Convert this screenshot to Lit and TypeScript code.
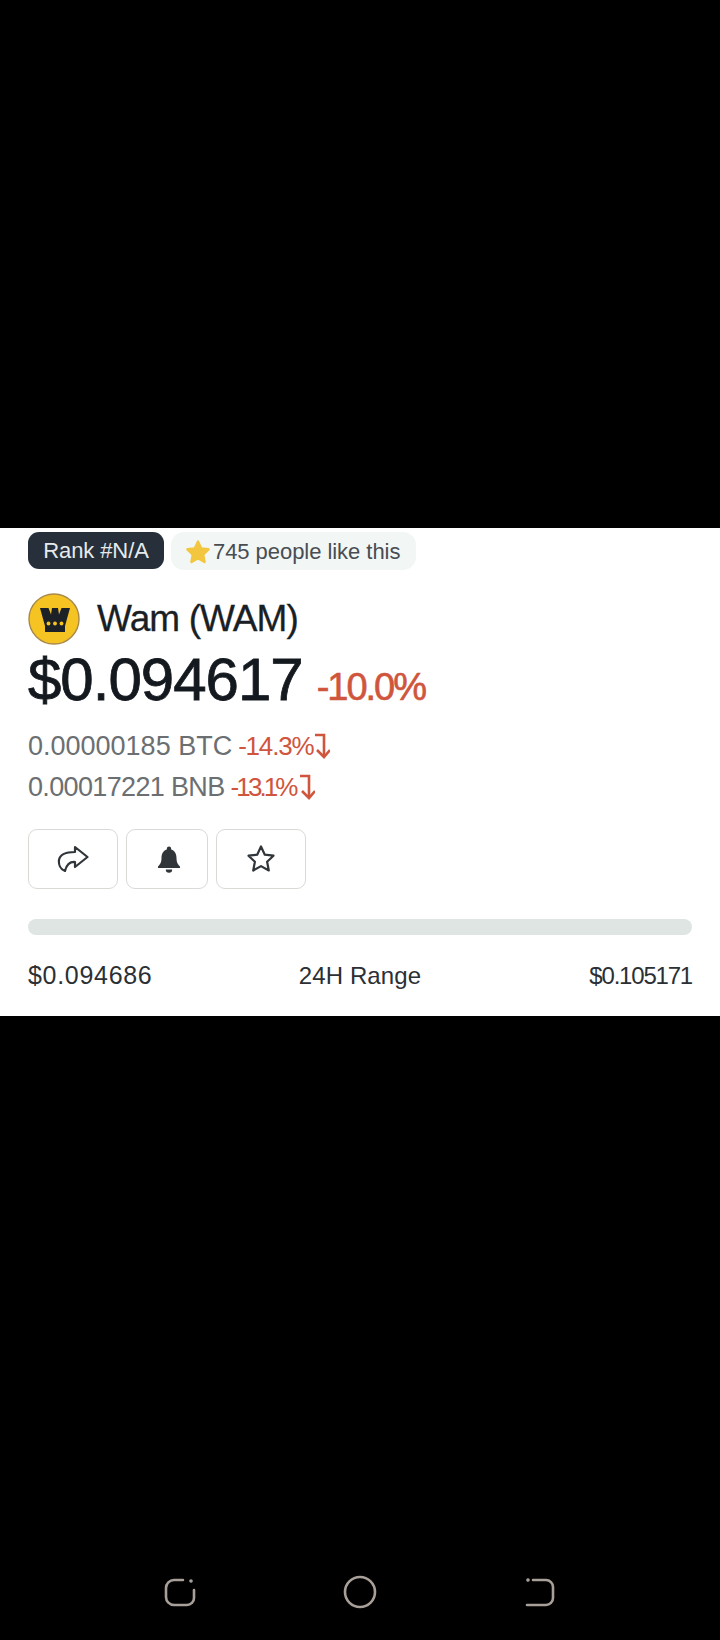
import { LitElement, html, css } from 'lit'
import { customElement } from 'lit/decorators.js'

const downArrow = html`<svg class="arrow" viewBox="0 0 16 26" fill="none" stroke="#cf553d" stroke-width="2.6">
	<path d="M1 2h9v21.500" />
	<path d="M3 17l7 7 6-7" />
</svg>`

@customElement('app-root')
export class AppRoot extends LitElement {
	static styles = css`
		:host {
			display: flex;
			flex-direction: column;
			width: 720px;
			height: 1640px;
			background: #000;
			font-family: 'Liberation Sans', Arial, sans-serif;
		}

		.top {
			height: 528px;
		}

		.card {
			height: 488px;
			box-sizing: border-box;
			background: #fff;
			padding: 4px 28px 0;
			color: #171c22;
		}

		.pills {
			display: flex;
			gap: 7px;
			height: 38px;
		}

		.rank {
			display: flex;
			align-items: center;
			justify-content: center;
			width: 136px;
			height: 37px;
			background: #262f3a;
			color: #e6eaec;
			border-radius: 11px;
			font-size: 22px;
			letter-spacing: -0.1px;
		}

		.likes {
			display: flex;
			align-items: center;
			gap: 2px;
			padding: 1px 14px 0;
			width: 245px;
			box-sizing: border-box;
			background: #f2f6f5;
			border-radius: 13px;
			color: #484d52;
			font-size: 22px;
			letter-spacing: -0.05px;
		}

		.star {
			width: 26px;
			height: 26px;
			flex: none;
		}

		.name-row {
			display: flex;
			align-items: center;
			gap: 17px;
			margin-top: 23px;
			height: 52px;
		}

		.logo {
			width: 52px;
			height: 52px;
			flex: none;
		}

		.name {
			font-size: 37px;
			letter-spacing: -0.9px;
			color: #1a1f25;
			-webkit-text-stroke: 0.3px #1a1f25;
		}

		.price-row {
			display: flex;
			align-items: baseline;
			gap: 14px;
			margin-top: 0;
			height: 70px;
			line-height: 70px;
		}

		.price {
			font-size: 60px;
			letter-spacing: -1px;
			color: #14191f;
			-webkit-text-stroke: 0.8px #14191f;
		}

		.change {
			font-size: 38px;
			letter-spacing: -2px;
			color: #cf553d;
			-webkit-text-stroke: 0.6px #cf553d;
		}

		.pairs {
			margin-top: 16px;
			display: flex;
			flex-direction: column;
			gap: 11px;
		}

		.pair {
			display: flex;
			align-items: center;
			height: 30px;
			font-size: 27px;
			color: #6b6f72;
		}

		.pair.bnb {
			letter-spacing: -0.65px;
		}

		.pct {
			margin-left: 6px;
			font-size: 26px;
			color: #cf553d;
		}

		.btc .pct {
			letter-spacing: -1.2px;
		}

		.bnb .pct {
			letter-spacing: -2.9px;
			margin-right: 2px;
		}

		.arrow {
			width: 16px;
			height: 26px;
			margin-left: 1px;
		}

		.actions {
			display: flex;
			gap: 8px;
			margin-top: 27px;
		}

		.action {
			display: flex;
			align-items: center;
			justify-content: center;
			width: 90px;
			height: 60px;
			box-sizing: border-box;
			border: 1px solid #d8dbd5;
			border-radius: 9px;
			background: #fff;
		}

		.action.bell {
			width: 82px;
		}

		.action svg {
			width: 32px;
			height: 32px;
		}

		.action.bell svg {
			margin-left: 3px;
		}

		.track {
			height: 16px;
			margin-top: 30px;
			border-radius: 8px;
			background: #dfe5e3;
		}

		.range {
			display: grid;
			grid-template-columns: 1fr auto 1fr;
			align-items: baseline;
			margin-top: 26px;
			font-size: 24px;
			color: #2b3035;
		}

		.low {
			font-size: 25px;
			letter-spacing: 0.7px;
		}

		.label {
			letter-spacing: 0.1px;
		}

		.high {
			text-align: right;
			letter-spacing: -1.2px;
		}

		.bottom {
			flex: 1;
			display: flex;
			align-items: flex-end;
			justify-content: center;
			gap: 140px;
			padding-bottom: 29px;
		}

		.nav {
			width: 38px;
			height: 38px;
			display: block;
		}
	`

	render() {
		return html`
			<div class="top"></div>
			<div class="card">
				<div class="pills">
					<div class="rank">Rank #N/A</div>
					<div class="likes">
						<svg class="star" viewBox="0 0 24 24">
							<path fill="#f3c63f" stroke="#f3c63f" stroke-width="2.4" stroke-linejoin="round" d="M12 2.500l2.900 6.300 6.800.8-5 4.700 1.300 6.800-6-3.400-6 3.400 1.300-6.800-5-4.700 6.800-.8z" />
						</svg>
						<span>745 people like this</span>
					</div>
				</div>

				<div class="name-row">
					<svg class="logo" viewBox="0 0 52 52">
						<circle cx="26" cy="26" r="25" fill="#f5c322" stroke="#a8894a" stroke-width="1.4" />
						<path fill="#1c2128" d="M12 15h8.500l2.500 6.500 1-6.500h6l1 6.500 2.500-6.500H42l-5 18v6H17v-6z" />
						<circle cx="20.500" cy="30.500" r="1.900" fill="#f5c322" />
						<circle cx="27" cy="30.500" r="1.900" fill="#f5c322" />
						<circle cx="33.500" cy="30.500" r="1.900" fill="#f5c322" />
					</svg>
					<span class="name">Wam (WAM)</span>
				</div>

				<div class="price-row">
					<span class="price">$0.094617</span>
					<span class="change">-10.0%</span>
				</div>

				<div class="pairs">
					<div class="pair btc">0.00000185 BTC<span class="pct">-14.3%</span>${downArrow}</div>
					<div class="pair bnb">0.00017221 BNB<span class="pct">-13.1%</span>${downArrow}</div>
				</div>

				<div class="actions">
					<div class="action">
						<svg viewBox="0 0 32 32" fill="none" stroke="#30353a" stroke-width="2.200" stroke-linejoin="round">
							<path d="M18 4l12.500 10L18 24v-5c-6-.5-8.500 3-10 9-5-2-6.500-7-6-11 1-6 8-8 16-8z" />
						</svg>
					</div>
					<div class="action bell">
						<svg viewBox="0 0 32 32">
							<path fill="#30353a" d="M16 3.500a2.200 2.200 0 0 1 2.200 2.200v.8c3.800 1.200 5.300 4.700 5.300 8.500 0 4.500 1.500 6.500 3.500 8.500v1.500H5v-1.500c2-2 3.500-4 3.500-8.500 0-3.800 1.500-7.300 5.300-8.500v-.8a2.200 2.200 0 0 1 2.200-2.200z" />
							<path fill="#30353a" d="M12.800 26.500h6.400a3.200 3.200 0 0 1-6.400 0z" />
						</svg>
					</div>
					<div class="action">
						<svg viewBox="0 0 32 32" fill="none" stroke="#30353a" stroke-width="2.200" stroke-linejoin="round">
							<path d="M16 3.500l3.800 8.200 8.700 1-6.400 6 1.700 8.800-7.800-4.400-7.800 4.400 1.700-8.800-6.400-6 8.700-1z" />
						</svg>
					</div>
				</div>

				<div class="track"></div>

				<div class="range">
					<span class="low">$0.094686</span>
					<span class="label">24H Range</span>
					<span class="high">$0.105171</span>
				</div>
			</div>
			<div class="bottom">
				<svg class="nav" viewBox="0 0 38 38" fill="none" stroke="#a79f98" stroke-width="2.600" stroke-linecap="round">
					<path d="M20 7h-9a8 8 0 0 0-8 8v9a8 8 0 0 0 8 8h13a7 7 0 0 0 7-7V17" />
					<circle cx="28" cy="8" r="1.200" fill="#a79f98" stroke-width="1.200" />
				</svg>
				<svg class="nav" viewBox="0 0 38 38" fill="none" stroke="#a79f98" stroke-width="2.600">
					<circle cx="19" cy="19" r="15" />
				</svg>
				<svg class="nav" viewBox="0 0 38 38" fill="none" stroke="#a79f98" stroke-width="2.600" stroke-linecap="round">
					<path d="M14 7h13a7 7 0 0 1 7 7v11a7 7 0 0 1-7 7H8" />
					<circle cx="9" cy="7" r="1.200" fill="#a79f98" stroke-width="1.200" />
				</svg>
			</div>
		`
	}
}
